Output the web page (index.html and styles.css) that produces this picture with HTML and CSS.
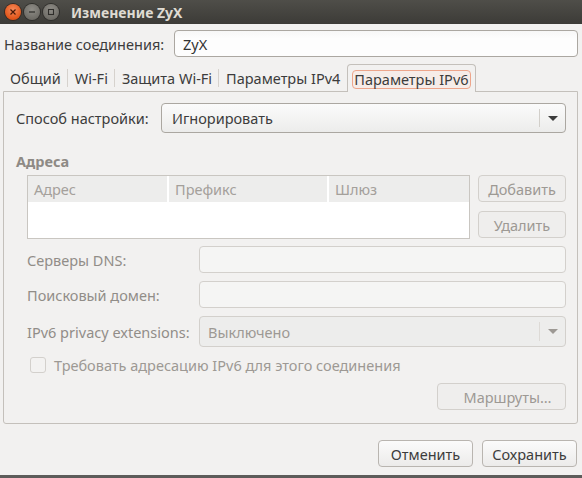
FILE: index.html
```html
<!DOCTYPE html>
<html lang="ru">
<head>
<meta charset="utf-8">
<title>Изменение ZyX</title>
<link rel="stylesheet" href="styles.css">
</head>
<body>
<div class="window">
  <div class="titlebar">
    <div class="wbtns">
      <span class="wbtn close"><svg width="8" height="8" viewBox="0 0 8 8"><path d="M1.5 1.5L6.5 6.5M6.5 1.5L1.5 6.5" stroke="#4a1a08" stroke-width="1.2"/></svg></span>
      <span class="wbtn min"><svg width="8" height="8" viewBox="0 0 8 8"><path d="M1 4H7" stroke="#2e2d2a" stroke-width="1.2"/></svg></span>
      <span class="wbtn max"><svg width="8" height="8" viewBox="0 0 8 8"><rect x="1.5" y="1.5" width="5" height="5" fill="none" stroke="#2e2d2a" stroke-width="1.1"/></svg></span>
    </div>
    <div class="title">Изменение ZyX</div>
  </div>
  <div class="content">
    <div class="name-row">
      <span class="name-label">Название соединения:</span>
      <div class="entry name-entry">ZyX</div>
    </div>
    <div class="notebook">
      <div class="tabs">
        <div class="tab">Общий</div>
        <div class="tab">Wi-Fi</div>
        <div class="tab">Защита Wi-Fi</div>
        <div class="tab last">Параметры IPv4</div>
        <div class="tab active"><span class="focus">Параметры IPv6</span></div>
      </div>
      <div class="panel">
        <div class="method-row">
          <span class="method-label">Способ настройки:</span>
          <div class="combo">
            <span class="combo-text">Игнорировать</span>
            <span class="combo-sep"></span>
            <span class="combo-arrow"></span>
          </div>
        </div>
        <div class="section-title">Адреса</div>
        <div class="addr-block">
          <div class="table">
            <div class="thead">
              <div class="th c1">Адрес</div>
              <div class="th c2">Префикс</div>
              <div class="th c3">Шлюз</div>
            </div>
            <div class="tbody"></div>
          </div>
          <div class="side-btns">
            <div class="btn dis">Добавить</div>
            <div class="btn dis">Удалить</div>
          </div>
        </div>
        <div class="form">
          <span class="flabel">Серверы DNS:</span>
          <div class="entry dis-entry"></div>
          <span class="flabel">Поисковый домен:</span>
          <div class="entry dis-entry"></div>
          <span class="flabel">IPv6 privacy extensions:</span>
          <div class="combo dis-combo">
            <span class="combo-text">Выключено</span>
            <span class="combo-sep"></span>
            <span class="combo-arrow"></span>
          </div>
        </div>
        <div class="check-row">
          <span class="checkbox"></span>
          <span class="check-label">Требовать адресацию IPv6 для этого соединения</span>
        </div>
        <div class="routes-row">
          <div class="btn dis routes">Маршруты…</div>
        </div>
      </div>
    </div>
    <div class="actions">
      <div class="btn act">Отменить</div>
      <div class="btn act">Сохранить</div>
    </div>
  </div>
  <div class="bottom-strip"></div>
</div>
</body>
</html>
```

FILE: styles.css
```css
* { box-sizing: border-box; }
html, body { margin: 0; padding: 0; }
body {
  width: 582px;
  height: 478px;
  overflow: hidden;
  font-family: "Noto Sans", "Open Sans", sans-serif;
  font-size: 14.5px;
  color: #3c3c3c;
  background: #f2f1f0;
}
.window {
  width: 582px;
  height: 478px;
  display: flex;
  flex-direction: column;
}
.titlebar {
  height: 24px;
  flex: none;
  background: linear-gradient(#4f4e49, #3c3b37);
  display: flex;
  align-items: center;
  padding-left: 5px;
}
.wbtns { display: flex; gap: 2px; align-items: center; }
.wbtn {
  width: 16px; height: 16px;
  border-radius: 50%;
  display: flex; align-items: center; justify-content: center;
  margin-right: 1px;
}
.wbtn.close {
  background: radial-gradient(circle at 50% 35%, #f68a5a, #e25519 70%, #c8461a);
  box-shadow: 0 0 0 1px #3a2a22;
}
.wbtn.min, .wbtn.max {
  background: radial-gradient(circle at 50% 35%, #8f8d87, #6f6d67 70%, #5e5c57);
  box-shadow: 0 0 0 1px #2f2e2b;
}
.title {
  margin-left: 11px;
  font-family: "Noto Sans", sans-serif;
  font-weight: bold;
  font-size: 14px;
  color: #dfdbd2;
}
.content {
  flex: 1;
  display: flex;
  flex-direction: column;
  padding: 6px 4px 0 4px;
}
.name-row {
  display: flex;
  align-items: center;
  height: 27px;
}
.name-label { width: 170px; }
.entry {
  height: 27px;
  border: 1px solid #aba7a1;
  border-radius: 4px;
  background: linear-gradient(#f7f7f7, #fdfdfd 30%);
  display: flex;
  align-items: center;
  padding-left: 8px;
  color: #333;
}
.name-entry { flex: 1; }
.notebook { margin-top: 7px; }
.tabs {
  display: flex;
  align-items: flex-end;
  height: 27px;
  margin-left: -1px;
}
.tab {
  height: 26px;
  display: flex;
  align-items: center;
  padding: 0 7px;
  position: relative;
  color: #3c3c3c;
}
.tab::after {
  content: "";
  position: absolute;
  right: 0;
  top: 4px;
  bottom: 4px;
  width: 1px;
  background: #d6d2cd;
}
.tab.last::after, .tab.active::after { display: none; }
.tab.active {
  height: 28px;
  border: 1px solid #c4c0bb;
  border-bottom: none;
  border-radius: 4px 4px 0 0;
  background: #f2f1f0;
  padding: 0 4px;
  margin-bottom: -1px;
  z-index: 1;
}
.focus {
  border: 1px solid #eda58b;
  border-radius: 4px;
  background: #f6ece8;
  padding: 0 1px;
  height: 19px;
  display: flex;
  align-items: center;
  margin-top: 1px;
}
.panel {
  border: 1px solid #c4c0bb;
  border-radius: 0 0 3px 3px;
  padding: 11px 11px 11px 12px;
  height: 333px;
  margin-left: -1px;
}
.method-row {
  display: flex;
  align-items: center;
}
.method-label { width: 145px; }
.combo {
  flex: 1;
  height: 30px;
  border: 1px solid #aba7a1;
  border-radius: 4px;
  background: linear-gradient(#fbfbfb, #ececeb);
  display: flex;
  align-items: center;
  padding-left: 10px;
}
.combo-text { flex: 1; }
.combo-sep {
  width: 1px;
  align-self: stretch;
  margin: 5px 0;
  background: #d2cfca;
}
.combo-arrow {
  width: 0; height: 0;
  border-left: 5px solid transparent;
  border-right: 5px solid transparent;
  border-top: 5px solid #3c3c3c;
  margin: 0 7px 0 8px;
}
.section-title {
  margin-top: 19px;
  font-weight: bold;
  color: #8e8a85;
  height: 18px;
  line-height: 18px;
}
.addr-block {
  display: flex;
  margin-left: 11px;
  margin-top: 5px;
  gap: 8px;
}
.table {
  width: 443px;
  height: 64px;
  border: 1px solid #c9c6c1;
  background: #fff;
}
.thead {
  display: flex;
  height: 26px;
  background: #fff;
  gap: 2px;
}
.th {
  background: #ededec;
  display: flex;
  align-items: center;
  padding-left: 6px;
  color: #a4a09b;
}
.th.c1 { width: 139px; }
.th.c2 { width: 158px; }
.th.c3 { flex: 1; }
.side-btns {
  display: flex;
  flex-direction: column;
  gap: 9px;
}
.btn {
  height: 27px;
  border: 1px solid #b9b5b0;
  border-radius: 4px;
  background: linear-gradient(#fbfbfb, #ecebea);
  display: flex;
  align-items: center;
  justify-content: center;
}
.btn.dis {
  width: 88px;
  border-color: #d3d0cc;
  background: #efeeed;
  color: #9d9994;
}
.form {
  display: grid;
  grid-template-columns: 172px 1fr;
  margin-left: 11px;
  margin-top: 7px;
  row-gap: 8px;
  align-items: center;
}
.flabel { color: #918d88; }
.dis-entry {
  border-color: #d3d0cc;
  background: #f5f5f4;
}
.dis-combo {
  height: 31px;
  border-color: #d3d0cc;
  background: #ededec;
  color: #9d9994;
  padding-left: 8px;
}
.dis-combo .combo-arrow { border-top-color: #9d9994; }
.dis-combo .combo-sep { background: #dddad6; }
.check-row {
  display: flex;
  align-items: center;
  margin-left: 14px;
  margin-top: 9px;
  height: 17px;
}
.checkbox {
  width: 16px; height: 16px;
  border: 1px solid #d3d0cc;
  border-radius: 3px;
  background: #f3f2f1;
  margin-right: 8px;
}
.check-label { color: #9d9994; }
.routes-row {
  display: flex;
  justify-content: flex-end;
  margin-top: 10px;
}
.btn.routes { width: 129px; padding-left: 12px; }
.actions {
  display: flex;
  justify-content: flex-end;
  gap: 9px;
  margin-top: 16px;
  margin-right: 1px;
}
.btn.act { width: 95px; color: #3c3c3c; }
.bottom-strip {
  height: 3px;
  flex: none;
  background: #5d5c5a;
}
```
